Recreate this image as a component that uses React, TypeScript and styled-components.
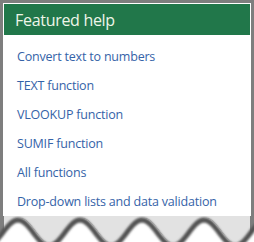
import React from "react";
import styled, { createGlobalStyle } from "styled-components";

const Global = createGlobalStyle`
  html, body { margin: 0; padding: 0; background: #ffffff; }
  body { font-family: "Open Sans", "Noto Sans", sans-serif; }
`;

const Page = styled.div`
  width: 254px;
  height: 242px;
  display: flex;
  flex-direction: column;
  overflow: hidden;
`;

const Frame = styled.div`
  background: #7e7e7e;
  padding: 3px 3px 0 3px;
`;

const Panel = styled.div`
  background: #ffffff;
  padding: 1px 1px 0 1px;
`;

const Header = styled.div`
  height: 31px;
  background: #21774a;
  color: #eef5e8;
  font-family: "Open Sans", "Noto Sans", sans-serif;
  font-size: 16px;
  display: flex;
  align-items: center;
  padding-left: 11px;
  letter-spacing: -0.3px;
`;

const List = styled.ul`
  list-style: none;
  margin: 0;
  padding: 7px 0 0 13px;
  display: flex;
  flex-direction: column;
`;

const Item = styled.li`
  height: 29px;
  display: flex;
  align-items: center;
  font-family: "Open Sans", "Noto Sans", sans-serif;
  font-size: 12.5px;
  color: #3563a8;
  letter-spacing: -0.2px;
`;

const Torn = styled.svg`
  display: block;
  width: 254px;
  height: 26px;
`;

const links = [
  "Convert text to numbers",
  "TEXT function",
  "VLOOKUP function",
  "SUMIF function",
  "All functions",
  "Drop-down lists and data validation",
];

function waveY(x: number): number {
  return 15 - 13 * Math.cos((2 * Math.PI * (x - 20)) / 62);
}

function wavePoints(): string[] {
  const pts: string[] = [];
  for (let x = -6; x <= 260; x += 2) {
    pts.push(`${x},${waveY(x).toFixed(2)}`);
  }
  return pts;
}

const TornEdge: React.FC = () => {
  const pts = wavePoints();
  const above = `M-6,-2 L260,-2 L${[...pts].reverse().join(" L")} Z`;
  return (
    <Torn viewBox="0 0 254 26">
      <defs>
        <filter id="blur" x="-10%" y="-60%" width="120%" height="220%">
          <feGaussianBlur stdDeviation="1.1" />
        </filter>
        <clipPath id="aboveWave">
          <path d={above} />
        </clipPath>
      </defs>
      <rect x="0" y="0" width="254" height="26" fill="#ffffff" />
      <g clipPath="url(#aboveWave)">
        <rect x="0" y="-2" width="254" height="30" fill="#7e7e7e" />
        <rect x="4" y="-2" width="246" height="30" fill="#e2e2e2" />
      </g>
      <path
        d={`M${pts.join(" L")}`}
        fill="none"
        stroke="#525252"
        strokeWidth="5"
        transform="translate(-2,2)"
        filter="url(#blur)"
      />
    </Torn>
  );
};

export default function App() {
  return (
    <Page>
      <Global />
      <Frame>
        <Panel>
          <Header>Featured help</Header>
          <List>
            {links.map((l) => (
              <Item key={l}>{l}</Item>
            ))}
          </List>
        </Panel>
      </Frame>
      <TornEdge />
    </Page>
  );
}
